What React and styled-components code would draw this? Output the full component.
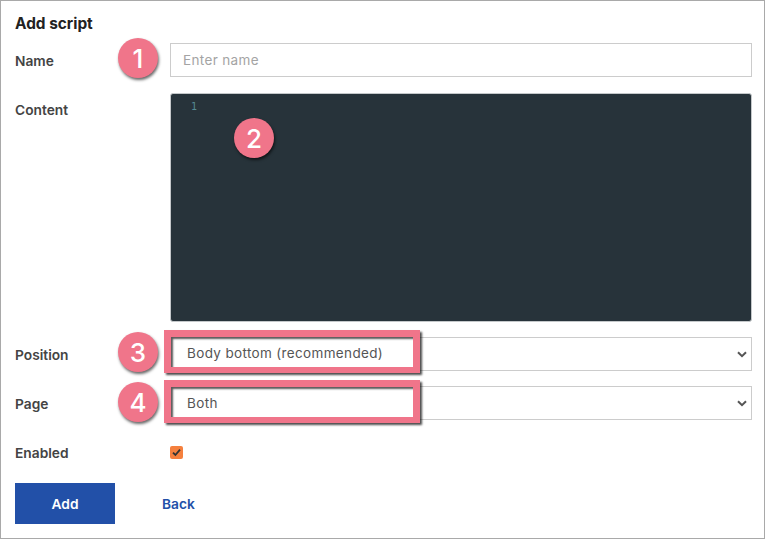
import React from "react";
import styled, { createGlobalStyle } from "styled-components";

const GlobalStyle = createGlobalStyle`
  html, body {
    margin: 0;
    padding: 0;
    background: #fff;
  }
  * {
    box-sizing: border-box;
  }
`;

const Frame = styled.div`
  position: relative;
  width: 765px;
  height: 539px;
  padding: 14px 12px 0 14px;
  border: 1px solid #a9a9a9;
  background: #fff;
  font-family: Inter, "Liberation Sans", sans-serif;
  color: #444;
`;

const Heading = styled.h1`
  margin: 0 0 11px;
  font-size: 15.4px;
  line-height: 17px;
  font-weight: 700;
  color: #222;
`;

const Row = styled.div`
  display: grid;
  grid-template-columns: 155px 582px;
  align-items: ${(p) => (p.$top ? "start" : "center")};
  margin-bottom: ${(p) => p.$gap || 16}px;
`;

const Label = styled.label`
  font-size: 13.75px;
  line-height: 16px;
  font-weight: 600;
  color: #444;
  padding-top: ${(p) => p.$pad || 2}px;
`;

const TextInput = styled.input`
  width: 100%;
  height: 34px;
  padding: 0 12px;
  border: 1px solid #ccc;
  background: #fff;
  font: 400 13.5px Inter, sans-serif;
  letter-spacing: 0.35px;
  color: #555;
  outline: none;
  &::placeholder {
    color: #a4a4a4;
    opacity: 1;
  }
`;

const Editor = styled.div`
  height: 229px;
  padding: 7px 0 0 20px;
  border: 1px solid #c4c8ca;
  border-radius: 3px;
  background: #27333a;
  font: 400 10px "DejaVu Sans Mono", monospace;
  line-height: 12px;
  color: #568a92;
`;

const SelectBox = styled.div`
  position: relative;
  height: 34px;
  border: 1px solid #ccc;
  background: #fff;
  svg {
    position: absolute;
    right: 4px;
    top: 50%;
    margin-top: -3px;
  }
`;

const Check = styled.span`
  width: 13px;
  height: 13px;
  display: flex;
  align-items: center;
  justify-content: center;
  border-radius: 2px;
  background: #f5803e;
`;

const Actions = styled.div`
  display: flex;
  align-items: center;
  gap: 47px;
`;

const AddButton = styled.button`
  width: 100px;
  height: 41px;
  border: 0;
  background: #2250a8;
  color: #fff;
  font: 600 13.75px Inter, sans-serif;
`;

const BackLink = styled.a`
  font-size: 13.75px;
  font-weight: 600;
  color: #2250a8;
`;

const Badge = styled.span`
  position: absolute;
  left: ${(p) => p.$x}px;
  top: ${(p) => p.$y}px;
  width: 40px;
  height: 40px;
  display: flex;
  align-items: center;
  justify-content: center;
  border-radius: 50%;
  background: #f0758a;
  box-shadow: 1px 2px 3px rgba(0, 0, 0, 0.6);
  color: #fff;
  font-size: 26px;
  font-weight: 500;
`;

const Highlight = styled.div`
  position: absolute;
  left: 163px;
  top: ${(p) => p.$y}px;
  width: 256px;
  height: 43px;
  padding: 2px 0 0 16px;
  border: 7px solid #f0758a;
  border-bottom-width: 6px;
  box-shadow: 2px 2px 2px rgba(0, 0, 0, 0.7), inset 2px 2px 2px rgba(0, 0, 0, 0.65);
  display: flex;
  align-items: center;
  background: #fff;
  font-size: 13.5px;
  letter-spacing: 0.35px;
  color: #555;
`;

const Chevron = () => (
  <svg width="10" height="7" viewBox="0 0 10 7">
    <path d="M1 1.2 L5 5.2 L9 1.2" fill="none" stroke="#555" strokeWidth="2" />
  </svg>
);

export default function App() {
  return (
    <Frame>
      <GlobalStyle />
      <Heading>Add script</Heading>
      <Row>
        <Label>Name</Label>
        <TextInput placeholder="Enter name" />
      </Row>
      <Row $top $gap={15}>
        <Label $pad={9}>Content</Label>
        <Editor>1</Editor>
      </Row>
      <Row $gap={15}>
        <Label>Position</Label>
        <SelectBox>
          <Chevron />
        </SelectBox>
      </Row>
      <Row $gap={23}>
        <Label>Page</Label>
        <SelectBox>
          <Chevron />
        </SelectBox>
      </Row>
      <Row $gap={22}>
        <Label>Enabled</Label>
        <Check>
          <svg width="9" height="9" viewBox="0 0 9 9">
            <path d="M1 4.6 L3.4 7 L8 1.6" fill="none" stroke="#333" strokeWidth="1.8" />
          </svg>
        </Check>
      </Row>
      <Actions>
        <AddButton>Add</AddButton>
        <BackLink>Back</BackLink>
      </Actions>

      <Highlight $y={329}>Body bottom (recommended)</Highlight>
      <Highlight $y={379}>Both</Highlight>
      <Badge $x={117} $y={37}>1</Badge>
      <Badge $x={233} $y={117}>2</Badge>
      <Badge $x={117} $y={331}>3</Badge>
      <Badge $x={117} $y={381}>4</Badge>
    </Frame>
  );
}
